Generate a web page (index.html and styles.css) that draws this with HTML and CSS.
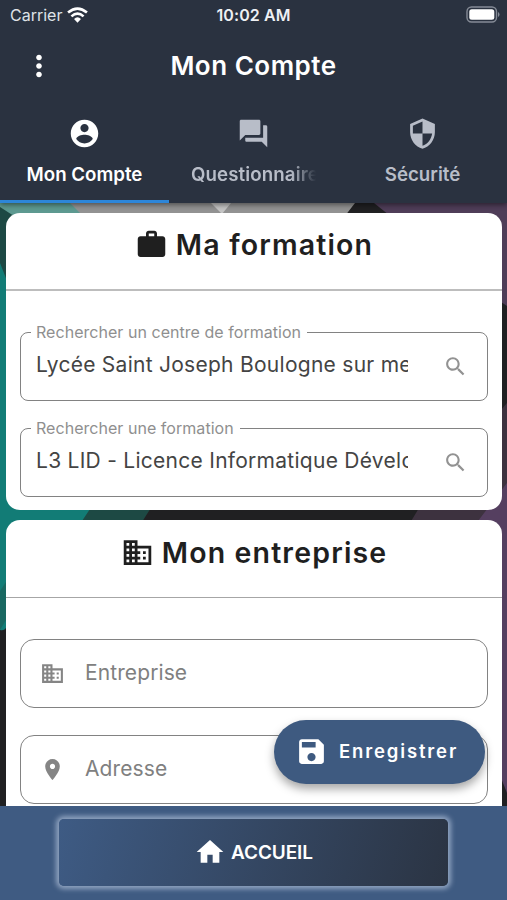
FILE: index.html
```html
<!DOCTYPE html>
<html lang="fr">
<head>
<meta charset="utf-8">
<meta name="viewport" content="width=device-width, initial-scale=1">
<title>Mon Compte</title>
<link rel="stylesheet" href="styles.css">
</head>
<body>
<svg class="defs" width="0" height="0" aria-hidden="true">
  <symbol id="building" viewBox="0 0 24 24"><path d="M12 7V3H2v18h20V7H12zM6 19H4v-2h2v2zm0-4H4v-2h2v2zm0-4H4V9h2v2zm0-4H4V5h2v2zm4 12H8v-2h2v2zm0-4H8v-2h2v2zm0-4H8V9h2v2zm0-4H8V5h2v2zm10 12h-8v-2h2v-2h-2v-2h2v-2h-2V9h8v10zm-2-8h-2v2h2v-2zm0 4h-2v2h2v-2z"/></symbol>
  <symbol id="search" viewBox="0 0 24 24"><path d="M15.5 14h-.79l-.28-.27C15.41 12.59 16 11.11 16 9.500 16 5.910 13.090 3 9.500 3S3 5.910 3 9.500 5.910 16 9.500 16c1.610 0 3.090-.59 4.230-1.570l.27.28v.79l5 4.990L20.490 19l-4.990-5zm-6 0C7.010 14 5 11.990 5 9.500S7.010 5 9.500 5 14 7.010 14 9.500 11.990 14 9.500 14z"/></symbol>
</svg>
<div class="app">
  <header class="topbar">
    <div class="status">
      <div class="carrier"><span>Carrier</span>
        <svg class="wifi" viewBox="0 0 20 15"><g fill="none" stroke="#fff" stroke-width="2.500"><path d="M1 5.200Q10-2.400 19 5.200"/><path d="M4.200 8.800Q10 3.600 15.800 8.800"/></g><path d="M6.700 11.200Q10 8.300 13.300 11.200L10 14.800Z" fill="#fff"/></svg>
      </div>
      <div class="clock">10:02 AM</div>
      <svg class="battery" viewBox="0 0 34 17"><rect x="1" y="1" width="29.500" height="15" rx="4.500" fill="none" stroke="#858b96" stroke-width="1.400"/><rect x="3.300" y="3.300" width="25" height="10.400" rx="2.500" fill="#fff"/><path d="M32 6v5q1.500-.6 1.500-2.500T32 6z" fill="#858b96"/></svg>
    </div>
    <div class="titlebar">
      <svg class="more" viewBox="0 0 24 24"><path d="M12 8c1.100 0 2-.9 2-2s-.9-2-2-2-2 .9-2 2 .9 2 2 2zm0 2c-1.100 0-2 .9-2 2s.9 2 2 2 2-.9 2-2-.9-2-2-2zm0 6c-1.100 0-2 .9-2 2s.9 2 2 2 2-.9 2-2-.9-2-2-2z"/></svg>
      <h1>Mon Compte</h1>
    </div>
    <nav class="tabs">
      <a class="tab active"><svg class="icon" viewBox="0 0 24 24"><path d="M12 2C6.480 2 2 6.480 2 12s4.480 10 10 10 10-4.480 10-10S17.520 2 12 2zm0 3c1.660 0 3 1.340 3 3s-1.340 3-3 3-3-1.340-3-3 1.340-3 3-3zm0 14.200c-2.500 0-4.710-1.280-6-3.220.03-1.990 4-3.080 6-3.080 1.990 0 5.970 1.090 6 3.080-1.290 1.940-3.500 3.220-6 3.220z"/></svg><span>Mon Compte</span></a>
      <a class="tab"><svg class="icon" viewBox="0 0 24 24"><path d="M21 6h-2v9H6v2c0 .55.45 1 1 1h11l4 4V7c0-.55-.45-1-1-1zm-4 6V3c0-.55-.45-1-1-1H3c-.55 0-1 .45-1 1v14l4-4h10c.55 0 1-.45 1-1z"/></svg><span class="fade">Questionnaires</span></a>
      <a class="tab"><svg class="icon" viewBox="0 0 24 24"><path d="M12 1L3 5v6c0 5.550 3.840 10.740 9 12 5.160-1.260 9-6.450 9-12V5l-9-4zm0 10.990h7c-.53 4.120-3.280 7.790-7 8.940V12H5V6.300l7-3.110v8.800z"/></svg><span>Sécurité</span></a>
    </nav>
  </header>

  <main class="content">
    <svg class="backdrop" viewBox="0 0 507 603" preserveAspectRatio="none">
      <rect width="507" height="603" fill="#202022"/>
      <path d="M0 0H355L270 110 88 317 0 420Z" fill="#929292"/>
      <path d="M211 0H231L222 11Z" fill="#c4c4c4"/>
      <path d="M0 0H70L80 10 0 80Z" fill="#5d9990"/>
      <path d="M0 4L14 13 154 300 135 330 0 350Z" fill="#1d4944"/>
      <path d="M0 60L94 300 82 318 6 425Q4 428 0 427Z" fill="#127c76"/>
      <path d="M0 388L6 379V417L0 427Z" fill="#196861"/>
      <path d="M374 0H507V103L480 85Z" fill="#4f3d58"/>
      <path d="M507 200V320H410L422 300Z" fill="#3d323f"/>
      <path d="M507 280L478 318 495 340V560L507 590Z" fill="#553f60"/>
    </svg>
    <section class="card formation">
      <h2><svg class="icon" viewBox="0 0 24 24"><path fill-rule="evenodd" d="M10 2h4c1.100 0 2 .9 2 2v2h4c1.100 0 2 .9 2 2v11c0 1.100-.9 2-2 2H4c-1.100 0-2-.9-2-2V8c0-1.100.9-2 2-2h4V4c0-1.100.9-2 2-2zm0 4h4V4h-4v2z"/></svg><span>Ma formation</span></h2>
      <div class="field filled">
        <label>Rechercher un centre de formation</label>
        <div class="value">Lycée Saint Joseph Boulogne sur mer</div>
        <svg class="search"><use href="#search"/></svg>
      </div>
      <div class="field filled">
        <label>Rechercher une formation</label>
        <div class="value">L3 LID - Licence Informatique Développement</div>
        <svg class="search"><use href="#search"/></svg>
      </div>
    </section>
    <section class="card company">
      <h2><svg class="icon"><use href="#building"/></svg><span>Mon entreprise</span></h2>
      <div class="field empty"><svg class="lead"><use href="#building"/></svg><span>Entreprise</span></div>
      <div class="field empty"><svg class="lead" viewBox="0 0 24 24"><path d="M12 2C8.130 2 5 5.130 5 9c0 5.250 7 13 7 13s7-7.750 7-13c0-3.870-3.130-7-7-7zm0 9.500c-1.380 0-2.500-1.120-2.500-2.500s1.120-2.500 2.500-2.500 2.500 1.120 2.500 2.500-1.120 2.500-2.500 2.500z"/></svg><span>Adresse</span></div>
    </section>
    <button class="save"><svg viewBox="0 0 24 24"><path d="M17 3H5c-1.110 0-2 .9-2 2v14c0 1.100.89 2 2 2h14c1.100 0 2-.9 2-2V7l-4-4zm-5 16c-1.660 0-3-1.340-3-3s1.340-3 3-3 3 1.340 3 3-1.340 3-3 3zm3-10H5V5h10v4z"/></svg><span>Enregistrer</span></button>
  </main>

  <footer class="bottom">
    <button class="home"><svg viewBox="0 0 24 24"><path d="M10 20v-6h4v6h5v-8h3L12 3 2 12h3v8z"/></svg><span>ACCUEIL</span></button>
  </footer>
</div>
</body>
</html>
```

FILE: styles.css
```css
* { box-sizing: border-box; }
body { margin: 0; font-family: Inter, "Liberation Sans", sans-serif; overflow: hidden; }
h1, h2 { margin: 0; }
svg { display: block; fill: currentColor; flex: none; }
span { white-space: nowrap; }
.defs { position: absolute; }
.icon { width: 33px; height: 33px; }
.app { width: 507px; height: 900px; display: flex; flex-direction: column; overflow: hidden; }

.topbar { height: 203px; flex: none; background: #2a3240; color: #fff; position: relative; z-index: 2; box-shadow: 0 2px 5px rgba(0, 0, 0, .45); display: flex; flex-direction: column; }
.status { height: 30px; display: grid; grid-template-columns: 1fr auto 1fr; align-items: center; padding: 0 7px 0 10px; }
.carrier { display: flex; align-items: center; gap: 5px; font-size: 16px; color: #dfe2e7; }
.wifi { width: 21px; height: 16px; margin-top: -1px; }
.clock { font-size: 16px; font-weight: 600; color: #eef0f4; letter-spacing: .1px; margin-right: 3px; }
.battery { width: 34px; height: 17px; justify-self: end; margin-top: -2px; }
.titlebar { height: 72px; display: grid; grid-template-columns: 77px 1fr 77px; align-items: center; }
.more { width: 34px; height: 34px; justify-self: center; }
h1 { text-align: center; font-size: 26px; font-weight: 600; letter-spacing: .5px; padding-bottom: 2px; }
.tabs { flex: 1; display: grid; grid-template-columns: repeat(3, 1fr); }
.tab { min-width: 0; display: flex; flex-direction: column; align-items: center; padding-top: 15px; gap: 11px; font-size: 18.700px; line-height: 27px; font-weight: 600; color: #b8bdc8; border-bottom: 3px solid transparent; }
.tab.active { color: #fff; border-color: #2d86d9; }
.fade { width: 125px; overflow: hidden; letter-spacing: .1px; -webkit-mask-image: linear-gradient(90deg, #000 80%, transparent); mask-image: linear-gradient(90deg, #000 80%, transparent); }

.content { flex: 1; min-height: 0; position: relative; overflow: hidden; padding: 10px 5px 0 6px; display: flex; flex-direction: column; gap: 10px; }
.backdrop { position: absolute; left: 0; top: 0; width: 507px; height: 603px; }
.card { position: relative; flex: none; background: #fff; border-radius: 14px; }
.formation { height: 297px; }
.company { height: 310px; }
h2 { height: 78px; padding-bottom: 13px; border-bottom: 1px solid #a6a6a6; display: flex; align-items: center; justify-content: center; gap: 8px; color: #1f1f1f; font-size: 28.500px; font-weight: 600; letter-spacing: 1.150px; }
.formation h2 { border-bottom: 2px solid #bdbdbd; }
.field { height: 69px; margin: 41px 14px 0; border: 1px solid #828282; border-radius: 8px; display: flex; align-items: center; position: relative; color: #444; }
.field + .field { margin-top: 27px; }
.field label { position: absolute; left: 10px; top: -12px; padding: 0 6px 0 5px; background: #fff; font-size: 16px; line-height: 22px; color: #8f8f8f; white-space: nowrap; letter-spacing: .04px; }
.value { width: 372px; margin-left: 15px; padding-bottom: 3px; font-size: 21px; line-height: 30px; overflow: hidden; white-space: nowrap; letter-spacing: .27px; }
.search { width: 25px; height: 25px; margin-left: 35px; margin-top: -1px; color: #929292; }
.field.empty { border-radius: 14px; color: #808080; font-size: 21px; letter-spacing: .1px; }
.empty span { padding-bottom: 2px; }
.lead { width: 25px; height: 25px; margin-left: 19px; margin-right: 20px; color: #858585; }
.save { position: absolute; left: 274px; top: 517px; width: 211px; height: 64px; padding: 0 0 1px 21px; border: 0; border-radius: 32px; background: #3e5a80; color: #fff; box-shadow: 0 5px 10px rgba(0, 0, 0, .35); display: flex; align-items: center; gap: 11px; font: 600 18.500px Inter, sans-serif; letter-spacing: 1.850px; }
.save svg { width: 33px; height: 33px; }
.save span { padding-bottom: 1px; }

.bottom { height: 94px; flex: none; position: relative; z-index: 2; background: #3f5b82; display: flex; justify-content: center; align-items: center; padding-bottom: 2px; }
.home { width: 389px; height: 67px; border: 0; border-radius: 5px; background: linear-gradient(105deg, #3e5b84, #2b3443); box-shadow: 0 0 5px 3px rgba(186, 202, 224, .65); color: #fff; display: flex; align-items: center; justify-content: center; gap: 5px; font: 600 19px Inter, sans-serif; letter-spacing: -.1px; }
.home svg { width: 32px; height: 32px; }
```
